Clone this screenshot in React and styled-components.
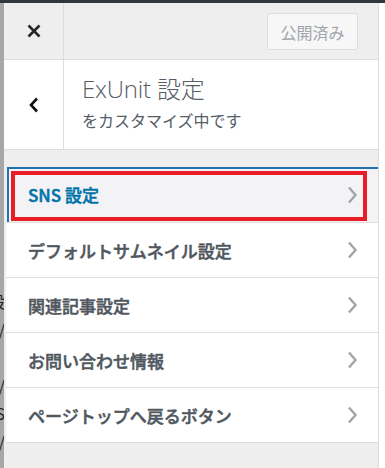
import React from "react";
import styled, { createGlobalStyle } from "styled-components";

const Global = createGlobalStyle`
  html, body { margin: 0; padding: 0; background: #fff; }
  body {
    font-family: "Noto Sans CJK JP", "Open Sans", sans-serif;
    width: 385px;
    height: 468px;
    overflow: hidden;
  }
`;

const Page = styled.div`
  display: flex;
  flex-direction: column;
  height: 468px;
`;

const TopBar = styled.div`
  height: 3px;
  background: #32373c;
  flex-shrink: 0;
`;

const Body = styled.div`
  display: flex;
  flex: 1;
  min-height: 0;
`;

const SiteStrip = styled.div`
  width: 4px;
  background: #a7a7a7;
  overflow: hidden;
  flex-shrink: 0;
`;

const SiteText = styled.div`
  width: 120px;
  margin-left: -115px;
  padding-top: 256px;
  font-family: "Noto Sans CJK JP", sans-serif;
  font-size: 16px;
  line-height: 28px;
  color: #222;
  text-align: right;
  white-space: nowrap;
`;

const Panel = styled.div`
  width: 374px;
  background: #eee;
  border-right: 1px solid #ddd;
  display: flex;
  flex-direction: column;
  flex-shrink: 0;
`;

const Header = styled.div`
  height: 56px;
  display: flex;
  align-items: center;
  border-bottom: 1px solid #ddd;
  flex-shrink: 0;
`;

const IconCell = styled.div`
  width: 59px;
  align-self: stretch;
  display: flex;
  align-items: center;
  justify-content: center;
  border-right: 1px solid #ddd;
`;

const Publish = styled.div`
  margin-left: auto;
  margin-right: 20px;
  margin-top: 1px;
  height: 35px;
  width: 89px;
  border: 1px solid #dcdcde;
  border-radius: 3px;
  background: #f7f7f7;
  color: #a0a5aa;
  font-size: 16px;
  display: flex;
  align-items: center;
  justify-content: center;
`;

const Section = styled.div`
  height: 89px;
  background: #fff;
  display: flex;
  border-bottom: 1px solid #ddd;
  flex-shrink: 0;
`;

const TitleBlock = styled.div`
  padding-left: 18px;
  padding-bottom: 3px;
  display: flex;
  flex-direction: column;
  justify-content: center;
  color: #555d66;
`;

const Title = styled.div`
  font-size: 24px;
  font-weight: 300;
  line-height: 30px;
  font-family: "Open Sans", "Noto Sans CJK JP", sans-serif;
  letter-spacing: -0.2px;
`;

const Subtitle = styled.div`
  font-size: 16px;
  line-height: 24px;
  margin-top: 4px;
`;

const List = styled.div`
  margin-top: 17px;
  margin-left: 2px;
  display: flex;
  flex-direction: column;
`;

const Item = styled.div`
  height: ${(p) => (p.$active ? "55px" : "54px")};
  background: ${(p) => (p.$active ? "#f3f3f5" : "#fff")};
  border-bottom: 1px solid #ddd;
  display: flex;
  align-items: center;
  padding: 0 20px 0 22px;
  font-size: 17px;
  font-weight: 500;
  -webkit-text-stroke: 0.5px currentColor;
  color: ${(p) => (p.$active ? "#0073aa" : "#50575e")};
  position: relative;
  box-shadow: ${(p) => (p.$active ? "inset 2px 2px 0 #2271b1" : "none")};
  margin-left: ${(p) => (p.$active ? "1px" : "0")};
`;

const Label = styled.span`
  flex: 1;
  margin-left: ${(p) => (p.$active ? "-1px" : "0")};
`;

const Highlight = styled.div`
  position: absolute;
  left: 4px;
  right: 11px;
  top: 4px;
  bottom: 1px;
  border: 4px solid #ea1c27;
  pointer-events: none;
`;

const Chevron = () => (
  <svg width="11" height="18" viewBox="0 0 11 18">
    <path d="M2 1.5 L8.5 9 L2 16.5" fill="none" stroke="#a0a5aa" strokeWidth="2.4" />
  </svg>
);

const items = [
  "SNS 設定",
  "デフォルトサムネイル設定",
  "関連記事設定",
  "お問い合わせ情報",
  "ページトップへ戻るボタン",
];

export default function App() {
  return (
    <Page>
      <Global />
      <TopBar />
      <Body>
        <SiteStrip>
          <SiteText>
            <div>&nbsp;</div>
            <div>設</div>
            <div>/</div>
            <div>&nbsp;</div>
            <div>/</div>
            <div>S</div>
            <div>/</div>
          </SiteText>
        </SiteStrip>
        <Panel>
          <Header>
            <IconCell>
              <svg width="14" height="14" viewBox="0 0 14 14">
                <path d="M1.5 1.5 L12.5 12.5 M12.5 1.5 L1.5 12.5" stroke="#23282d" strokeWidth="2.6" />
              </svg>
            </IconCell>
            <Publish>公開済み</Publish>
          </Header>
          <Section>
            <IconCell>
              <svg width="12" height="16" viewBox="0 0 12 16">
                <path d="M9 1.5 L3 8 L9 14.5" fill="none" stroke="#111" strokeWidth="2.6" />
              </svg>
            </IconCell>
            <TitleBlock>
              <Title>ExUnit 設定</Title>
              <Subtitle>をカスタマイズ中です</Subtitle>
            </TitleBlock>
          </Section>
          <List>
            {items.map((t, i) => (
              <Item key={t} $active={i === 0}>
                <Label $active={i === 0}>{t}</Label>
                <Chevron />
                {i === 0 && <Highlight />}
              </Item>
            ))}
          </List>
        </Panel>
      </Body>
    </Page>
  );
}
